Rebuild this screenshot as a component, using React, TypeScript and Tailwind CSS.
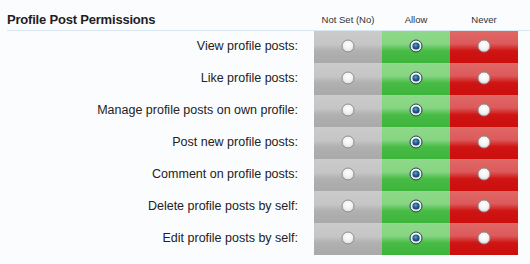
import React from 'react';

const permissions = [
  'View profile posts:',
  'Like profile posts:',
  'Manage profile posts on own profile:',
  'Post new profile posts:',
  'Comment on profile posts:',
  'Delete profile posts by self:',
  'Edit profile posts by self:',
];

const Radio: React.FC<{ checked?: boolean }> = ({ checked }) => (
  <svg width="14" height="14" viewBox="0 0 14 14">
    <defs>
      <radialGradient id="rg" cx="50%" cy="40%" r="60%">
        <stop offset="0%" stopColor="#ffffff" />
        <stop offset="60%" stopColor="#f2f2f2" />
        <stop offset="100%" stopColor="#d6d6d6" />
      </radialGradient>
      <radialGradient id="dot" cx="45%" cy="40%" r="60%">
        <stop offset="0%" stopColor="#5fa3d6" />
        <stop offset="55%" stopColor="#1f5f92" />
        <stop offset="100%" stopColor="#123a5c" />
      </radialGradient>
    </defs>
    <circle cx="7" cy="7" r="6" fill="url(#rg)" stroke={checked ? '#2e3e4a' : '#8e8e8e'} strokeWidth="1" />
    {checked && <circle cx="7" cy="7" r="3.6" fill="url(#dot)" />}
  </svg>
);

export default function App() {
  return (
    <div className="w-[530px] h-[264px] bg-[#fbfcfe] font-['Liberation_Sans',Arial,sans-serif] text-[#222]">
      <div className="ml-[7px] h-[31px] flex border-b border-[#d9e7f1]">
        <h2 className="pt-[12px] text-[13px] leading-[16px] font-bold text-[#1f1f1f] tracking-[-0.2px]">
          Profile Post Permissions
        </h2>
        <div className="ml-auto mr-[12px] flex text-[9.5px] leading-[12px] text-[#333]">
          <div className="w-[68px] pt-[14px] text-center">Not Set (No)</div>
          <div className="w-[68px] pt-[14px] text-center">Allow</div>
          <div className="w-[68px] pt-[14px] text-center">Never</div>
        </div>
      </div>
      <div className="flex flex-col">
        {permissions.map((label) => (
          <div key={label} className="flex h-[32px]">
            <div className="flex-1 flex items-center justify-end pr-[16px] text-[12.5px] pb-[1px]">
              {label}
            </div>
            <div className="w-[68px] flex items-center justify-center pb-[2px] bg-[linear-gradient(to_bottom,#cbcbcb_0%,#c5c5c5_42%,#b0b0b0_62%,#a9a9a9_100%)]">
              <Radio />
            </div>
            <div className="w-[68px] flex items-center justify-center pb-[2px] bg-[linear-gradient(to_bottom,#8ed98a_0%,#86d582_40%,#48bc46_62%,#3db53b_100%)]">
              <Radio checked />
            </div>
            <div className="w-[68px] mr-[12px] flex items-center justify-center pb-[2px] bg-[linear-gradient(to_bottom,#e16868_0%,#dc5a5a_40%,#d01414_62%,#cb0e0e_100%)]">
              <Radio />
            </div>
          </div>
        ))}
      </div>
    </div>
  );
}
